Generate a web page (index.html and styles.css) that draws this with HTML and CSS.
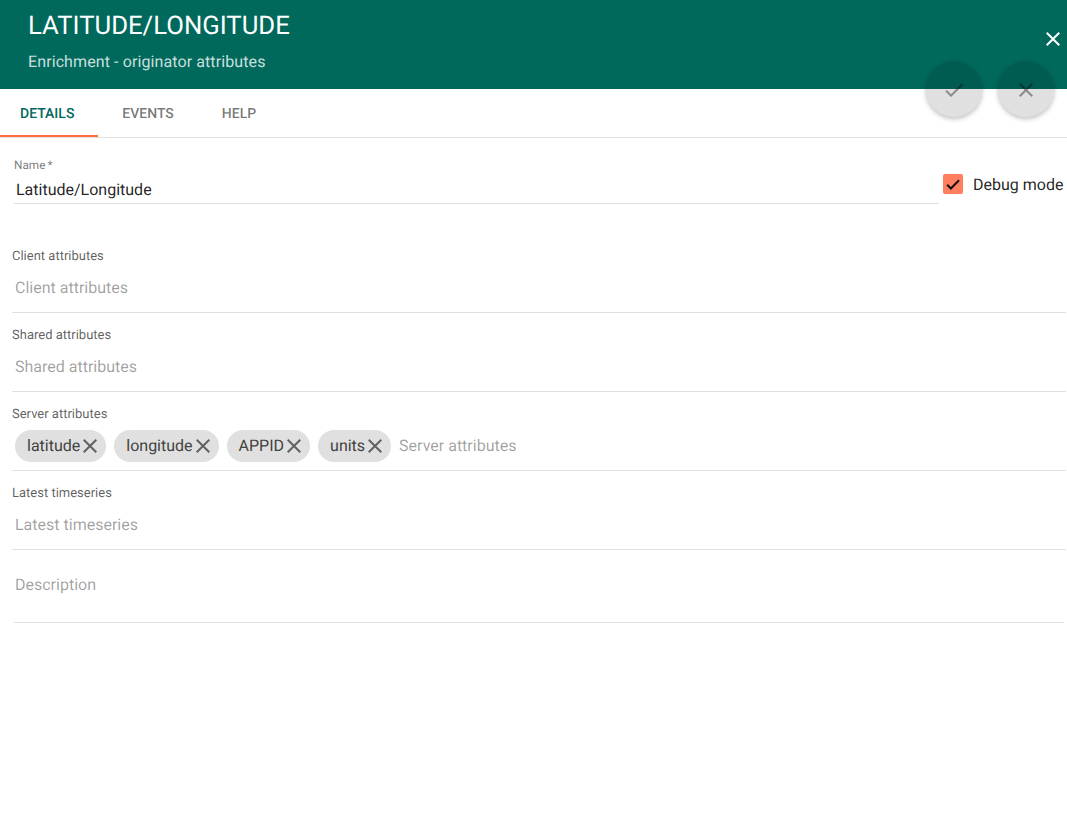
FILE: index.html
```html
<!DOCTYPE html>
<html lang="en">
<head>
<meta charset="utf-8">
<title>Rule node details</title>
<link rel="stylesheet" href="styles.css">
</head>
<body>
<header class="header">
  <div class="heading">
    <h1 class="title">LATITUDE/LONGITUDE</h1>
    <p class="subtitle">Enrichment - originator attributes</p>
  </div>
  <button class="close" aria-label="Close"><svg class="icon" viewBox="0 0 24 24"><path d="M19 6.41L17.59 5 12 10.59 6.41 5 5 6.41 10.59 12 5 17.59 6.41 19 12 13.41 17.59 19 19 17.59 13.41 12z"/></svg></button>
  <div class="actions">
    <button class="fab" aria-label="Apply" disabled><svg class="icon" viewBox="0 0 24 24"><path d="M9 16.17L4.83 12l-1.42 1.41L9 19 21 7l-1.41-1.41z"/></svg></button>
    <button class="fab" aria-label="Cancel" disabled><svg class="icon" viewBox="0 0 24 24"><path d="M19 6.41L17.59 5 12 10.59 6.41 5 5 6.41 10.59 12 5 17.59 6.41 19 12 13.41 17.59 19 19 17.59 13.41 12z"/></svg></button>
  </div>
</header>
<nav class="tabs">
  <a class="tab tab-active">DETAILS</a>
  <a class="tab">EVENTS</a>
  <a class="tab">HELP</a>
</nav>
<main class="content">
  <div class="name-row">
    <div class="name-field">
      <label class="name-label">Name<span class="required">*</span></label>
      <div class="name-value">Latitude/Longitude</div>
    </div>
    <div class="debug">
      <span class="checkbox"><svg class="check" viewBox="0 0 20 20"><path d="M4.2 10.8 7.9 14.5 16 6.2"/></svg></span>
      <span class="debug-label">Debug mode</span>
    </div>
  </div>
  <section class="field">
    <label class="field-label">Client attributes</label>
    <div class="chips"><span class="placeholder">Client attributes</span></div>
  </section>
  <section class="field">
    <label class="field-label">Shared attributes</label>
    <div class="chips"><span class="placeholder">Shared attributes</span></div>
  </section>
  <section class="field">
    <label class="field-label">Server attributes</label>
    <div class="chips">
      <span class="chip">latitude<svg class="remove" viewBox="0 0 14 14"><path d="M.7.7 13.3 13.3M13.3.7.7 13.3"/></svg></span>
      <span class="chip">longitude<svg class="remove" viewBox="0 0 14 14"><path d="M.7.7 13.3 13.3M13.3.7.7 13.3"/></svg></span>
      <span class="chip">APPID<svg class="remove" viewBox="0 0 14 14"><path d="M.7.7 13.3 13.3M13.3.7.7 13.3"/></svg></span>
      <span class="chip">units<svg class="remove" viewBox="0 0 14 14"><path d="M.7.7 13.3 13.3M13.3.7.7 13.3"/></svg></span>
      <span class="placeholder">Server attributes</span>
    </div>
  </section>
  <section class="field">
    <label class="field-label">Latest timeseries</label>
    <div class="chips"><span class="placeholder">Latest timeseries</span></div>
  </section>
  <div class="description">Description</div>
</main>
</body>
</html>
```

FILE: styles.css
```css
* { box-sizing: border-box; }
body {
  margin: 0;
  background: #fff;
  color: rgba(0, 0, 0, .87);
  font-family: Roboto, sans-serif;
  font-size: 16px;
  text-rendering: geometricPrecision;
}
button { border: 0; padding: 0; background: none; font: inherit; }
.icon { display: block; width: 24px; height: 24px; fill: currentColor; }

.header {
  position: relative;
  display: flex;
  justify-content: space-between;
  height: 89px;
  padding: 10px 2px 0 28px;
  background: #00695c;
  color: #fff;
}
.title { margin: 0; font-size: 25.7px; font-weight: 400; line-height: 32px; }
.subtitle { margin: 10px 0 0; line-height: 20px; letter-spacing: .1px; color: rgba(255, 255, 255, .8); }
.close { align-self: flex-start; margin-top: 17px; color: #fff; }
.actions { position: absolute; top: 61px; right: 13px; display: flex; gap: 16px; }
.fab {
  display: flex;
  align-items: center;
  justify-content: center;
  width: 56px;
  height: 56px;
  padding-top: 2px;
  border-radius: 50%;
  background: rgba(0, 0, 0, .12);
  box-shadow: 0 2px 5px 0 rgba(0, 0, 0, .26);
  color: rgba(0, 0, 0, .38);
}

.tabs { display: flex; height: 49px; border-bottom: 1px solid #e0e0e0; }
.tab {
  height: 48px;
  padding: 0 24px;
  font-size: 14px;
  font-weight: 500;
  line-height: 50px;
  color: rgba(0, 0, 0, .54);
}
.tab-active { padding-left: 20px; color: #00695c; border-bottom: 2px solid #ff6e40; }

.content { padding: 18px 1px 0 12px; }
.name-row { display: flex; height: 91px; }
.name-field { width: 925px; height: 48px; margin-left: 2px; border-bottom: 1px solid #e0e0e0; }
.name-label { display: block; font-size: 11.8px; line-height: 18px; color: rgba(0, 0, 0, .54); }
.required { margin-left: 2px; }
.name-value { margin-top: 6px; padding-left: 2px; line-height: 20px; }
.debug { display: flex; align-items: center; height: 20px; margin: 18px 0 0 4px; gap: 10px; white-space: nowrap; }
.checkbox { width: 20px; height: 20px; border-radius: 2px; background: #ff7f60; }
.check { display: block; fill: none; stroke: #111; stroke-width: 2; }

.field { height: 79px; }
.field-label { display: block; height: 18px; font-size: 13px; line-height: 20px; color: rgba(0, 0, 0, .64); }
.chips {
  display: flex;
  align-items: center;
  gap: 8px;
  height: 48px;
  padding: 0 3px 2px;
  border-bottom: 1px solid #e0e0e0;
}
.placeholder { color: rgba(0, 0, 0, .38); }
.chip {
  display: flex;
  align-items: center;
  height: 32px;
  padding: 0 9px 0 12px;
  gap: 3px;
  border-radius: 16px;
  background: #e0e0e0;
  color: #424242;
}
.remove { width: 14px; height: 14px; fill: none; stroke: #616161; stroke-width: 2; }
.description {
  height: 60px;
  margin: 0 2px;
  padding: 12px 1px 0;
  border-bottom: 1px solid #e0e0e0;
  line-height: 20px;
  color: rgba(0, 0, 0, .38);
}
```
